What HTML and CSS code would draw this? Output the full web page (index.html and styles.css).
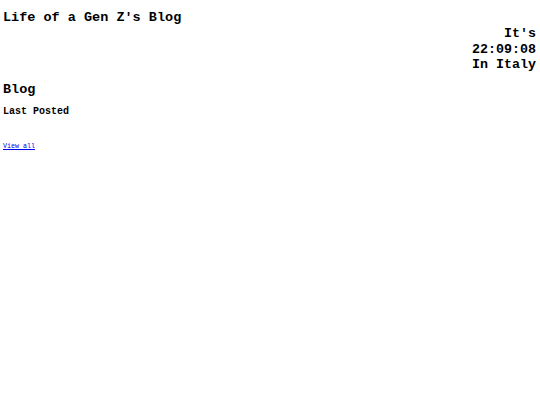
FILE: index.html
```
<!DOCTYPE html>
<html>
<head>
<meta charset="utf-8">
<link rel="stylesheet" href="styles.css">
</head>
<body>
<header class="header">
  <h1 class="title">Life of a Gen Z's Blog</h1>
  <div class="clock">It's<br>22:09:08<br>In Italy</div>
</header>
<main class="blog">
  <h2 class="blog-title">Blog</h2>
  <h3 class="last">Last Posted</h3>
  <a class="view-all" href="#">View all</a>
</main>
</body>
</html>
```
FILE: styles.css
```
html, body {
  margin: 0;
  padding: 0;
  background: #fff;
  color: #000;
  font-family: "Liberation Mono", "Courier New", monospace;
}
body {
  padding: 10px 4px 0 3px;
}
.header {
  display: flex;
  flex-direction: column;
}
.title {
  margin: 0;
  font-size: 13.5px;
  line-height: 16px;
  font-weight: bold;
}
.clock {
  align-self: flex-end;
  text-align: right;
  font-size: 13.33px;
  line-height: 15.5px;
  font-weight: bold;
  margin-top: 0;
}
.blog-title {
  margin: 9px 0 0;
  font-size: 13.5px;
  line-height: 16px;
  font-weight: bold;
}
.last {
  margin: 8px 0 0;
  font-size: 10px;
  line-height: 12px;
  font-weight: bold;
}
.view-all {
  display: block;
  margin-top: 24px;
  font-size: 6.67px;
  line-height: 8px;
  color: #00e;
}
```
